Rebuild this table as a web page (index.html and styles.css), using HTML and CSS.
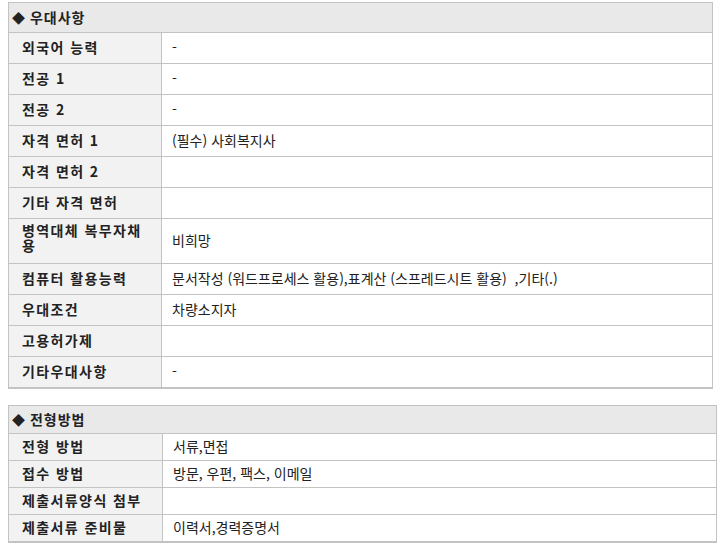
FILE: index.html
```html
<!DOCTYPE html>
<html lang="ko">
<head>
<meta charset="utf-8">
<title>우대사항 / 전형방법</title>
<link rel="stylesheet" href="styles.css">
</head>
<body>
<div class="page">
  <table class="info info-pref">
    <colgroup><col class="col-label"><col class="col-value"></colgroup>
    <tr><th class="head" colspan="2"><span class="bullet">◆</span> 우대사항</th></tr>
    <tr><th class="label">외국어 능력</th><td class="value">-</td></tr>
    <tr><th class="label">전공 1</th><td class="value">-</td></tr>
    <tr><th class="label">전공 2</th><td class="value">-</td></tr>
    <tr><th class="label">자격 면허 1</th><td class="value">(필수) 사회복지사</td></tr>
    <tr><th class="label">자격 면허 2</th><td class="value"></td></tr>
    <tr><th class="label">기타 자격 면허</th><td class="value"></td></tr>
    <tr><th class="label label-wrap">병역대체 복무자채용</th><td class="value">비희망</td></tr>
    <tr><th class="label">컴퓨터 활용능력</th><td class="value">문서작성 (워드프로세스 활용),표계산 (스프레드시트 활용) &nbsp;,기타(.)</td></tr>
    <tr><th class="label">우대조건</th><td class="value">차량소지자</td></tr>
    <tr><th class="label">고용허가제</th><td class="value"></td></tr>
    <tr><th class="label">기타우대사항</th><td class="value">-</td></tr>
  </table>

  <table class="info info-select">
    <colgroup><col class="col-label"><col class="col-value"></colgroup>
    <tr><th class="head" colspan="2"><span class="bullet">◆</span> 전형방법</th></tr>
    <tr><th class="label">전형 방법</th><td class="value">서류,면접</td></tr>
    <tr><th class="label">접수 방법</th><td class="value">방문, 우편, 팩스, 이메일</td></tr>
    <tr><th class="label">제출서류양식 첨부</th><td class="value"></td></tr>
    <tr><th class="label">제출서류 준비물</th><td class="value">이력서,경력증명서</td></tr>
  </table>
</div>
</body>
</html>
```

FILE: styles.css
```css
* { box-sizing: border-box; }

html, body {
  margin: 0;
  padding: 0;
  background: #ffffff;
}

body {
  font-family: "Noto Sans CJK KR", "Noto Sans", sans-serif;
  font-size: 14px;
  color: #222222;
}

.page {
  padding: 2px 0 0 8px;
  display: flex;
  flex-direction: column;
  align-items: flex-start;
  gap: 16px;
}

.info {
  border-collapse: separate;
  border-spacing: 0;
  border: 1px solid #c3c3c3;
  border-bottom-width: 2px;
  table-layout: fixed;
}

.info th,
.info td {
  text-align: left;
  vertical-align: middle;
  border-top: 1px solid #c3c3c3;
  line-height: 15px;
}

.info tr:first-child th {
  border-top: 0;
}

.head {
  background: #e9e9e9;
  font-weight: bold;
  letter-spacing: 1px;
  padding: 7px 4px 7px 3px;
}

.bullet {
  display: inline-block;
  letter-spacing: 0;
  font-size: 13px;
  line-height: 15px;
  vertical-align: top;
}

.label {
  background: #f2f2f2;
  font-weight: bold;
  letter-spacing: 1.4px;
  padding: 7px 12px 8px 13px;
  border-right: 1px solid #c3c3c3;
}

.label-wrap {
  padding-top: 4px;
  padding-bottom: 10px;
}

.value {
  background: #ffffff;
  padding: 7px 8px 8px 10px;
  white-space: nowrap;
}

.info-pref {
  width: 705px;
}

.info-pref .col-label {
  width: 153px;
}

.info-select {
  width: 709px;
}

.info-select .col-label {
  width: 154px;
}

.info-select .label,
.info-select .value {
  padding-top: 5px;
  padding-bottom: 6px;
}

.info-select .head {
  padding-top: 6px;
  padding-bottom: 6px;
}
```
